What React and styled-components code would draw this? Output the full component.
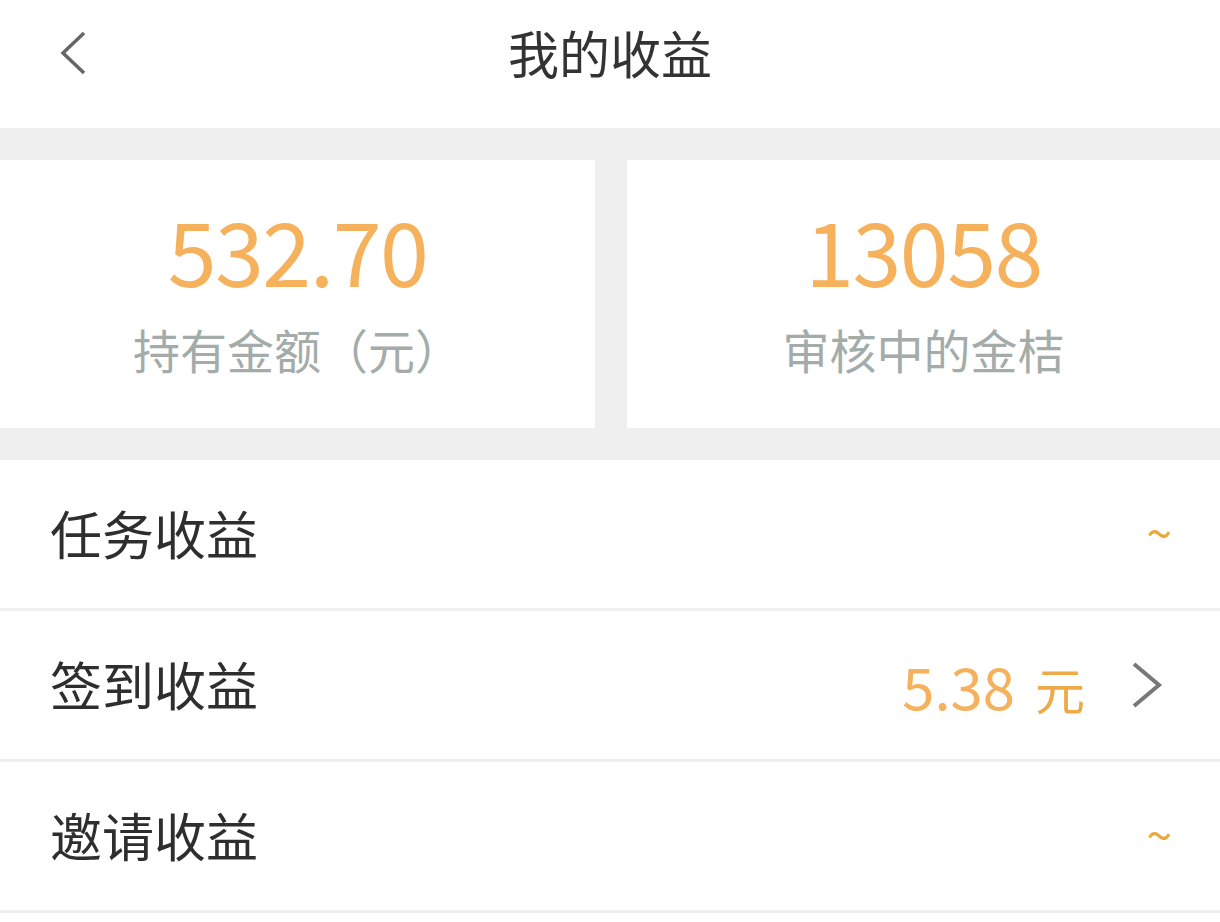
import React from 'react'
import styled, { createGlobalStyle } from 'styled-components'

const GlobalStyle = createGlobalStyle`
    html, body {
        margin: 0;
        padding: 0;
        background: #ffffff;
        font-family: "Noto Sans CJK SC", "Noto Sans", sans-serif;
    }
`

const summary = [
    { value: '532.70', label: '持有金额（元）' },
    { value: '13058', label: '审核中的金桔' }
]

const rows = [
    { title: '任务收益', amount: null },
    { title: '签到收益', amount: '5.38' },
    { title: '邀请收益', amount: null }
]

const BackIcon = () => (
    <svg width="32" height="46" viewBox="0 0 32 46" fill="none">
        <path d="M27 3 L6 23 L27 43" stroke="#666" strokeWidth="3.5" strokeLinejoin="miter" />
    </svg>
)

const ArrowIcon = () => (
    <svg width="32" height="48" viewBox="0 0 32 48" fill="none">
        <path d="M3 3 L28 24 L3 45" stroke="#777" strokeWidth="4" strokeLinejoin="miter" />
    </svg>
)

const App = () => {
    return (
        <Page>
            <GlobalStyle />
            <Header>
                <BackButton><BackIcon /></BackButton>
                <Title>我的收益</Title>
            </Header>

            <Summary>
                {summary.map(item => (
                    <Card key={item.label}>
                        <Amount>{item.value}</Amount>
                        <CardLabel>{item.label}</CardLabel>
                    </Card>
                ))}
            </Summary>

            <List>
                {rows.map(row => (
                    <Row key={row.title}>
                        <RowTitle>{row.title}</RowTitle>
                        {row.amount ? (
                            <RowRight>
                                <RowAmount>
                                    <AmountNum>{row.amount}</AmountNum>
                                    <AmountUnit>元</AmountUnit>
                                </RowAmount>
                                <ArrowIcon />
                            </RowRight>
                        ) : (
                            <Tilde>~</Tilde>
                        )}
                    </Row>
                ))}
            </List>
        </Page>
    )
}

const Page = styled.div`
    width: 1220px;
    min-height: 922px;
    background: #ffffff;
`

const Header = styled.div`
    position: relative;
    height: 128px;
    display: flex;
    align-items: center;
    justify-content: center;
    background: #ffffff;
`

const BackButton = styled.div`
    position: absolute;
    left: 57px;
    top: 30px;
    display: flex;
`

const Title = styled.h1`
    margin: 0 0 24px;
    font-size: 51px;
    font-weight: 400;
    color: #333333;
`

const Summary = styled.div`
    display: grid;
    grid-template-columns: 595px 1fr;
    gap: 32px;
    padding: 32px 0;
    background: #efefef;
`

const Card = styled.div`
    height: 268px;
    background: #ffffff;
    display: flex;
    flex-direction: column;
    align-items: center;
    padding-top: 39px;
    box-sizing: border-box;
`

const Amount = styled.div`
    font-size: 88px;
    line-height: 100px;
    letter-spacing: -1.5px;
    color: #f5b15c;
`

const CardLabel = styled.div`
    margin-top: 22px;
    font-size: 47px;
    line-height: 56px;
    color: #a3aca9;
`

const List = styled.div`
    display: flex;
    flex-direction: column;
`

const Row = styled.div`
    height: 148px;
    display: flex;
    align-items: center;
    justify-content: space-between;
    padding: 0 50px 0 50px;
    border-bottom: 3px solid #efefef;
    background: #ffffff;
`

const RowTitle = styled.div`
    font-size: 52px;
    color: #2e2e2e;
    margin-top: -4px;
`

const RowRight = styled.div`
    display: flex;
    align-items: center;
    gap: 46px;
    margin-right: 7px;
`

const RowAmount = styled.div`
    display: flex;
    align-items: baseline;
    gap: 20px;
    color: #f5b15c;
`

const AmountNum = styled.span`
    font-size: 58px;
`

const AmountUnit = styled.span`
    font-size: 50px;
    color: #eeaa48;
`

const Tilde = styled.div`
    font-size: 46px;
    color: #e8a93f;
    margin-top: -6px;
    margin-right: -2px;
`

export default App
